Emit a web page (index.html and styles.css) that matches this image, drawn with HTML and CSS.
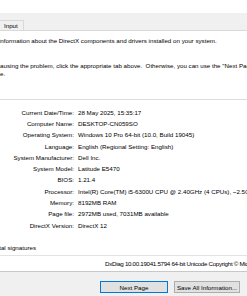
FILE: index.html
```html
<!DOCTYPE html>
<html lang="en">
<head>
    <meta charset="UTF-8">
    <meta name="viewport" content="width=device-width, initial-scale=1.0">
    <title>DirectX Diagnostic Tool</title>
    <link rel="stylesheet" href="styles.css">
</head>
<body>
    <div class="window">
        <div class="tab-top"></div>
        <div class="tab-row">
            <span class="tab">Input</span>
        </div>

        <div class="page">
            <p class="intro">information about the DirectX components and drivers installed on your system.</p>
            <p class="intro2">causing the problem, click the appropriate tab above.&nbsp; Otherwise, you can use the "Next Page" button below</p>
            <p class="intro3">e.</p>

            <div class="group">
                <div class="info">
                    <span class="label">Current Date/Time:</span><span class="value">28 May 2025, 15:35:17</span>
                    <span class="label">Computer Name:</span><span class="value">DESKTOP-CN059SO</span>
                    <span class="label">Operating System:</span><span class="value">Windows 10 Pro 64-bit (10.0, Build 19045)</span>
                    <span class="label">Language:</span><span class="value">English (Regional Setting: English)</span>
                    <span class="label">System Manufacturer:</span><span class="value">Dell Inc.</span>
                    <span class="label">System Model:</span><span class="value">Latitude E5470</span>
                    <span class="label">BIOS:</span><span class="value">1.21.4</span>
                    <span class="label">Processor:</span><span class="value">Intel(R) Core(TM) i5-6300U CPU @ 2.40GHz (4 CPUs), ~2.5GHz</span>
                    <span class="label">Memory:</span><span class="value">8192MB RAM</span>
                    <span class="label">Page file:</span><span class="value">2972MB used, 7031MB available</span>
                    <span class="label">DirectX Version:</span><span class="value">DirectX 12</span>
                </div>
            </div>

            <div class="check"><span>Check for WHQL digital signatures</span></div>
            <div class="version">DxDiag 10.00.19041.5794 64-bit Unicode Copyright © Microsoft. All rights reserved.</div>
        </div>

        <div class="buttons">
            <button class="btn btn-default" type="button">Next Page</button>
            <button class="btn" type="button">Save All Information...</button>
        </div>
    </div>
</body>
</html>
```

FILE: styles.css
```css
html, body {
    margin: 0;
    padding: 0;
}

body {
    width: 247px;
    height: 296px;
    overflow: hidden;
    background-color: #f0f0f0;
    font-family: "Liberation Sans", Arial, sans-serif;
    font-size: 6.2px;
    color: #000;
}

p {
    margin: 0;
}

.window {
    width: 247px;
    white-space: nowrap;
}

.tab-top {
    height: 13px;
    background-color: #ffffff;
}

.tab-row {
    height: 17px;
    display: flex;
    align-items: flex-end;
    border-bottom: 1px solid #d9d9d9;
}

.tab {
    display: block;
    height: 9px;
    line-height: 9px;
    margin-left: -1px;
    padding: 0 5px 0 4px;
    border: 1px solid #d9d9d9;
    border-bottom: none;
    background-color: #f0f0f0;
}

.page {
    height: 240px;
    background-color: #ffffff;
    border-bottom: 1px solid #c8c8c8;
    overflow: hidden;
    line-height: 8px;
}

.intro {
    margin-top: 6px;
    margin-left: -1px;
}

.intro2 {
    margin-top: 17px;
    margin-left: -3px;
}

.intro3 {
    margin-left: 0;
}

.group {
    margin-top: 21px;
    border-top: 1px solid #dcdcdc;
    padding-top: 7px;
}

.info {
    display: grid;
    grid-template-columns: 74px auto;
    grid-auto-rows: 11.3px;
    align-items: center;
    column-gap: 4px;
}

.label {
    text-align: right;
}

.check {
    width: 36px;
    margin-top: 13px;
    display: flex;
    justify-content: flex-end;
}

.version {
    margin-top: 3px;
    padding-top: 4px;
    padding-left: 105px;
    border-top: 1px solid #e3e3e3;
    letter-spacing: -0.3px;
}

.buttons {
    display: flex;
    gap: 6px;
    padding: 9px 0 0 100px;
}

.btn {
    height: 12px;
    padding: 0;
    border: 1px solid #adadad;
    background-color: #e1e1e1;
    font-family: inherit;
    font-size: 6.2px;
    color: #000;
}

.btn-default {
    width: 68px;
    border-color: #0078d7;
}

.btn:last-child {
    width: 66px;
}
```
